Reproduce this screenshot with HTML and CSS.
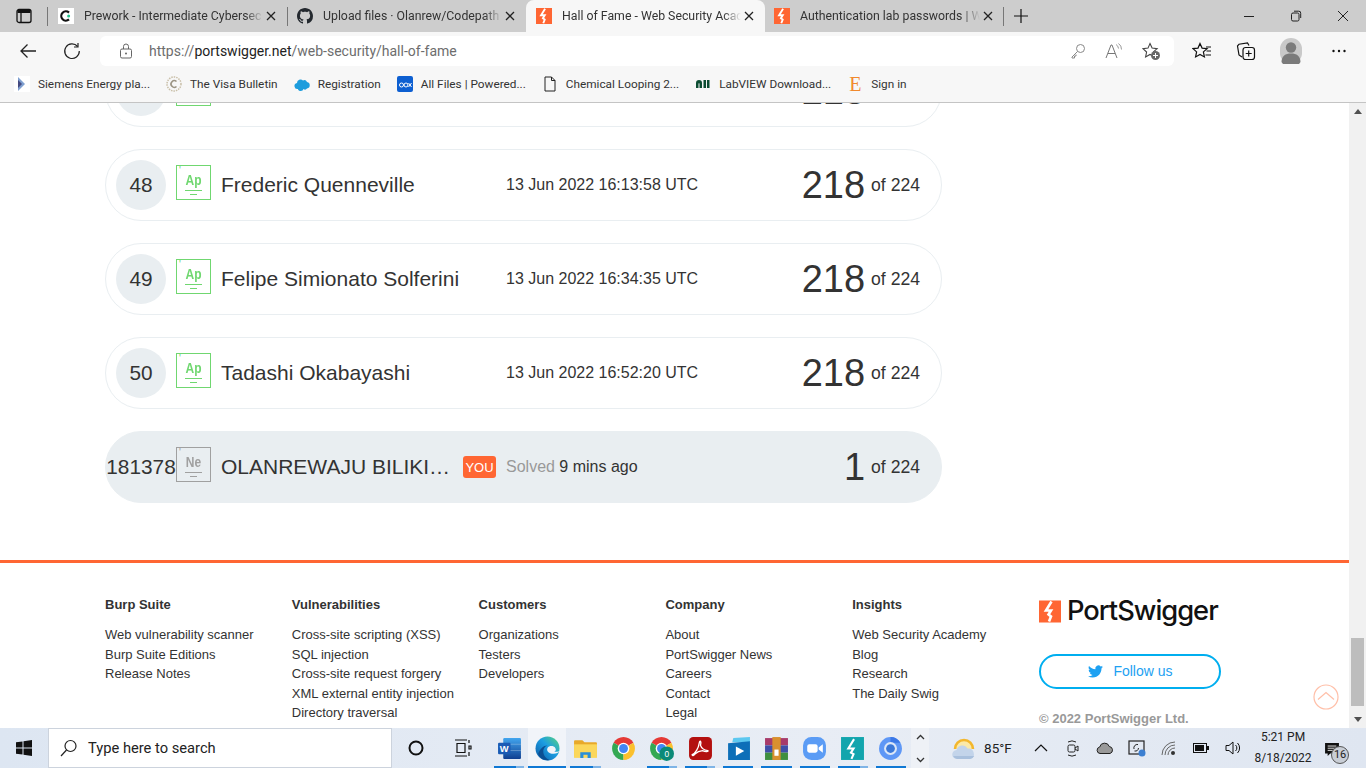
FILE: index.html
```html
<!DOCTYPE html>
<html lang="en">
<head>
  <meta charset="UTF-8">
  <title>Hall of Fame - Web Security Academy</title>
  <link rel="stylesheet" href="styles.css">
</head>
<body>
  <svg class="defs" width="0" height="0">
    <defs>
      <linearGradient id="edgeGrad" x1="0" y1="1" x2="1" y2="0">
        <stop offset="0" stop-color="#0c59a4"/>
        <stop offset="0.55" stop-color="#1b9de2"/>
        <stop offset="1" stop-color="#5bd77a"/>
      </linearGradient>
      <linearGradient id="wordGrad" x1="0" y1="0" x2="0" y2="1">
        <stop offset="0" stop-color="#41a5ee"/>
        <stop offset="1" stop-color="#103f91"/>
      </linearGradient>
    </defs>
    <symbol id="swig" viewBox="0 0 22 22">
      <rect width="22" height="22" fill="#ff6633"/>
      <path d="M12.5 1 7 10h5l-2.500 4 2.500 2-2 5" fill="none" stroke="#fff" stroke-width="2.600"/>
    </symbol>
    <symbol id="close" viewBox="0 0 10 10">
      <path d="M1 1l8 8M9 1l-8 8" fill="none" stroke="#222" stroke-width="1.300"/>
    </symbol>
    <symbol id="chrome" viewBox="0 0 24 24">
      <path d="M12 12 2.500 6.500A11 11 0 0 1 21.500 6.500z" fill="#e53935"/>
      <path d="M12 12 2.500 6.500A11 11 0 0 0 12 23z" fill="#34a853"/>
      <path d="M12 12v11A11 11 0 0 0 21.500 6.500z" fill="#fbc02d"/>
      <circle cx="12" cy="12" r="5.600" fill="#fff"/>
      <circle cx="12" cy="12" r="4.300" fill="#4285f4"/>
    </symbol>
  </svg>

  <!-- tab strip -->
  <div class="tabstrip">
    <div class="tab-side">
      <svg width="16" height="16" viewBox="0 0 16 16"><rect x="1" y="1.500" width="14" height="13" rx="2" fill="none" stroke="#111" stroke-width="1.300"/><path d="M5 5v9" stroke="#111" stroke-width="1.300"/><rect x="1.500" y="2" width="13" height="3" fill="#111"/></svg>
    </div>
    <div class="tab">
      <svg class="fav" viewBox="0 0 16 16"><rect width="16" height="16" fill="#fff"/><path d="M11 4.600A4.600 4.600 0 1 0 11 11.400" fill="none" stroke="#111" stroke-width="2.200"/><circle cx="10.600" cy="8" r="1.500" fill="#21c48d"/></svg>
      <span class="tab-title">Prework - Intermediate Cybersec</span>
      <svg class="tab-x"><use href="#close"/></svg>
    </div>
    <div class="tab tab-sep">
      <svg class="fav" viewBox="0 0 16 16"><path fill="#24292f" d="M8 0C3.58 0 0 3.58 0 8c0 3.54 2.29 6.53 5.47 7.59.4.07.55-.17.55-.38 0-.19-.01-.82-.01-1.49-2.01.37-2.53-.49-2.69-.94-.09-.23-.48-.94-.82-1.13-.28-.15-.68-.52-.01-.53.63-.01 1.08.58 1.23.82.72 1.21 1.87.87 2.33.66.07-.52.28-.87.51-1.07-1.78-.2-3.64-.89-3.64-3.95 0-.87.31-1.59.82-2.15-.08-.2-.36-1.02.08-2.12 0 0 .67-.21 2.2.82.64-.18 1.32-.27 2-.27.68 0 1.36.09 2 .27 1.53-1.04 2.2-.82 2.2-.82.44 1.1.16 1.92.08 2.12.51.56.82 1.27.82 2.15 0 3.07-1.87 3.75-3.65 3.95.29.25.54.73.54 1.48 0 1.07-.01 1.93-.01 2.2 0 .21.15.46.55.38A8.013 8.013 0 0016 8c0-4.42-3.58-8-8-8z"/></svg>
      <span class="tab-title">Upload files · Olanrew/Codepath</span>
      <svg class="tab-x"><use href="#close"/></svg>
    </div>
    <div class="tab tab-active">
      <svg class="fav"><use href="#swig"/></svg>
      <span class="tab-title">Hall of Fame - Web Security Acac</span>
      <svg class="tab-x"><use href="#close"/></svg>
    </div>
    <div class="tab tab-last">
      <svg class="fav"><use href="#swig"/></svg>
      <span class="tab-title">Authentication lab passwords | W</span>
      <svg class="tab-x"><use href="#close"/></svg>
    </div>
    <div class="tab-new">
      <svg width="16" height="16" viewBox="0 0 16 16"><path d="M8 1v14M1 8h14" stroke="#111" stroke-width="1.200"/></svg>
    </div>
    <div class="win-controls">
      <svg width="12" height="12" viewBox="0 0 12 12"><path d="M1 6.500h10" stroke="#222"/></svg>
      <svg width="12" height="12" viewBox="0 0 12 12"><rect x="1.500" y="3" width="7.500" height="8" rx="1.500" fill="none" stroke="#222"/><path d="M4 1.200h4.500A2 2 0 0 1 10.700 3.400V8" fill="none" stroke="#222"/></svg>
      <svg width="12" height="12" viewBox="0 0 12 12"><path d="M1 1l10 10M11 1 1 11" stroke="#222"/></svg>
    </div>
  </div>

  <!-- address bar -->
  <div class="toolbar">
    <button class="tool-btn first">
      <svg width="18" height="18" viewBox="0 0 18 18"><path d="M17 9H2M8.500 2.500 2 9l6.500 6.500" fill="none" stroke="#222" stroke-width="1.300"/></svg>
    </button>
    <button class="tool-btn">
      <svg width="18" height="18" viewBox="0 0 18 18"><path d="M14.600 4.500A7.300 7.300 0 1 0 16.300 9" fill="none" stroke="#222" stroke-width="1.200"/><path d="M15 1v4h-4" fill="none" stroke="#222" stroke-width="1.200"/></svg>
    </button>
    <div class="address">
      <svg class="lock" width="14" height="16" viewBox="0 0 14 16"><rect x="1.500" y="6" width="11" height="9" rx="1.500" fill="none" stroke="#666"/><path d="M4.500 6V3.500a2.500 2.500 0 0 1 5 0V6" fill="none" stroke="#666"/><circle cx="7" cy="10.500" r="1" fill="#666"/></svg>
      <span class="url">https://<b>portswigger.net</b>/web-security/hall-of-fame</span>
      <div class="addr-icons">
        <svg width="16" height="16" viewBox="0 0 16 16"><circle cx="10.500" cy="5.500" r="4" fill="none" stroke="#888"/><path d="M7.500 8.500 2 14v1h2.500v-2H6v-1.500" fill="none" stroke="#888"/></svg>
        <svg width="18" height="16" viewBox="0 0 18 16"><path d="M1 15 6 2h1l5 13M3 10.500h7" fill="none" stroke="#777"/><path d="M11 1.500a5 5 0 0 1 2.500 4M13.500 .5a7 7 0 0 1 3 6" fill="none" stroke="#999"/></svg>
        <svg width="19" height="19" viewBox="0 0 19 19"><path d="M8 1.500l2.100 4.600 5 .5-3.700 3.300 1 4.900L8 12.400l-4.400 2.500 1-4.900L1 6.600l5-.5z" fill="none" stroke="#444" stroke-width="1.100"/><circle cx="13.500" cy="13.500" r="4.500" fill="#666"/><path d="M13.500 11v5M11 13.500h5" stroke="#fff"/></svg>
      </div>
    </div>
    <div class="tool-right">
      <svg width="20" height="18" viewBox="0 0 20 18"><path d="M8 1.500l2.100 4.600 5 .5-3.700 3.300 1 5L8 12.400l-4.400 2.500 1-5L1 6.600l5-.5z" fill="none" stroke="#111" stroke-width="1.200"/><path d="M14 5h5M14.500 9h4.500M13.500 13h5.500" stroke="#111" stroke-width="1.200"/></svg>
      <svg width="20" height="20" viewBox="0 0 20 20"><rect x="7" y="6.500" width="11.500" height="12" rx="2.500" fill="none" stroke="#111" stroke-width="1.200"/><path d="M12.700 9.500v6M9.700 12.500h6M13 4.500 11.500 2 3 3.200 1.500 5 3 14l3 2" fill="none" stroke="#111" stroke-width="1.200"/></svg>
      <span class="avatar">
        <svg width="22" height="26" viewBox="0 0 22 26"><rect width="22" height="26" rx="11" fill="#c9c9c9"/><circle cx="11" cy="9.500" r="5.200" fill="#7b7b7b"/><path d="M1.500 24c0-6 4-8.500 9.500-8.500S20.500 18 20.500 24a11 11 0 0 1-19 0z" fill="#7b7b7b"/></svg>
      </span>
      <svg class="more" width="16" height="16" viewBox="0 0 16 16"><circle cx="2.500" cy="8" r="1.200" fill="#111"/><circle cx="8" cy="8" r="1.200" fill="#111"/><circle cx="13.500" cy="8" r="1.200" fill="#111"/></svg>
    </div>
  </div>

  <!-- favourites bar -->
  <div class="bookmarks">
    <div class="bm">
      <svg viewBox="0 0 16 16"><rect width="16" height="16" fill="#fff"/><path d="M4 1l7 7-7 7z" fill="#7f9fd0"/><path d="M4 4l4 4-4 4z" fill="#444a80"/></svg>
      <span>Siemens Energy pla...</span>
    </div>
    <div class="bm">
      <svg viewBox="0 0 16 16"><circle cx="8" cy="8" r="7" fill="none" stroke="#c9bfa8" stroke-width="1.500" stroke-dasharray="1.500 1"/><path d="M10.500 5.500A3.300 3.300 0 1 0 10.500 10.500" fill="none" stroke="#9b9484" stroke-width="1.600"/></svg>
      <span>The Visa Bulletin</span>
    </div>
    <div class="bm">
      <svg viewBox="0 0 16 16"><path d="M4 13a3 3 0 0 1-1-6 3.500 3.500 0 0 1 6-2.500 3 3 0 0 1 4 1.500 3.300 3.300 0 0 1 0 6.500 2.500 2.500 0 0 1-3.500.5 3 3 0 0 1-5.500.5z" fill="#1d9ddd"/></svg>
      <span>Registration</span>
    </div>
    <div class="bm">
      <svg viewBox="0 0 16 16"><rect width="16" height="16" rx="2" fill="#0d5fd1"/><circle cx="4.500" cy="9" r="2" fill="none" stroke="#fff"/><circle cx="9" cy="9" r="2" fill="none" stroke="#fff"/><path d="M11.500 7l3 4M14.500 7l-3 4" stroke="#fff"/></svg>
      <span>All Files | Powered...</span>
    </div>
    <div class="bm">
      <svg viewBox="0 0 16 16"><path d="M3 1h6.500L13 4.500V15H3z M9.500 1v3.500H13" fill="none" stroke="#222"/></svg>
      <span>Chemical Looping 2...</span>
    </div>
    <div class="bm">
      <svg viewBox="0 0 16 16"><path d="M1 12V7a3 3 0 0 1 6 0v5H4.500V7.500a.7.700 0 0 0-1 0V12z" fill="#0d4d33"/><path d="M8.500 4H11v8H8.500zM12 4h2.500v8H12z" fill="#0d4d33"/></svg>
      <span>LabVIEW Download...</span>
    </div>
    <div class="bm">
      <span class="etsy">E</span>
      <span>Sign in</span>
    </div>
  </div>

  <!-- page -->
  <div class="viewport">
    <main class="page">
      <div class="rows">
        <div class="row">
          <span class="rank">47</span>
          <span class="element">
            <i class="el-tick">'</i><b>Ap</b><i class="el-lines"></i>
          </span>
          <span class="name">Jan Kowalski</span>
          <span class="date">13 Jun 2022 15:58:41 UTC</span>
          <span class="score"><strong>218</strong> of 224</span>
        </div>
        <div class="row">
          <span class="rank">48</span>
          <span class="element">
            <i class="el-tick">'</i><b>Ap</b><i class="el-lines"></i>
          </span>
          <span class="name">Frederic Quenneville</span>
          <span class="date">13 Jun 2022 16:13:58 UTC</span>
          <span class="score"><strong>218</strong> of 224</span>
        </div>
        <div class="row">
          <span class="rank">49</span>
          <span class="element">
            <i class="el-tick">'</i><b>Ap</b><i class="el-lines"></i>
          </span>
          <span class="name">Felipe Simionato Solferini</span>
          <span class="date">13 Jun 2022 16:34:35 UTC</span>
          <span class="score"><strong>218</strong> of 224</span>
        </div>
        <div class="row">
          <span class="rank">50</span>
          <span class="element">
            <i class="el-tick">'</i><b>Ap</b><i class="el-lines"></i>
          </span>
          <span class="name">Tadashi Okabayashi</span>
          <span class="date">13 Jun 2022 16:52:20 UTC</span>
          <span class="score"><strong>218</strong> of 224</span>
        </div>
        <div class="row row-me">
          <span class="rank">181378</span>
          <span class="element element-ne">
            <i class="el-tick">'</i><b>Ne</b><i class="el-lines"></i>
          </span>
          <span class="name name-me">OLANREWAJU BILIKI…</span>
          <span class="you">YOU</span>
          <span class="date"><em>Solved</em> 9 mins ago</span>
          <span class="score"><strong>1</strong> of 224</span>
        </div>
      </div>

      <footer class="footer">
        <div class="foot-col">
          <h4>Burp Suite</h4>
          <a>Web vulnerability scanner</a>
          <a>Burp Suite Editions</a>
          <a>Release Notes</a>
        </div>
        <div class="foot-col">
          <h4>Vulnerabilities</h4>
          <a>Cross-site scripting (XSS)</a>
          <a>SQL injection</a>
          <a>Cross-site request forgery</a>
          <a>XML external entity injection</a>
          <a>Directory traversal</a>
          <a>Server-side request forgery</a>
        </div>
        <div class="foot-col">
          <h4>Customers</h4>
          <a>Organizations</a>
          <a>Testers</a>
          <a>Developers</a>
        </div>
        <div class="foot-col">
          <h4>Company</h4>
          <a>About</a>
          <a>PortSwigger News</a>
          <a>Careers</a>
          <a>Contact</a>
          <a>Legal</a>
          <a>Privacy Notice</a>
        </div>
        <div class="foot-col">
          <h4>Insights</h4>
          <a>Web Security Academy</a>
          <a>Blog</a>
          <a>Research</a>
          <a>The Daily Swig</a>
        </div>
        <div class="foot-col foot-brand">
          <div class="logo">
            <svg width="22" height="23"><use href="#swig"/></svg>
            <span>PortSwigger</span>
          </div>
          <div class="follow">
            <svg width="17" height="15" viewBox="0 0 24 24"><path fill="#1da1f2" d="M23.953 4.57a10 10 0 01-2.825.775 4.958 4.958 0 002.163-2.723c-.951.555-2.005.959-3.127 1.184a4.92 4.92 0 00-8.384 4.482C7.69 8.095 4.067 6.13 1.64 3.162a4.822 4.822 0 00-.666 2.475c0 1.71.87 3.213 2.188 4.096a4.904 4.904 0 01-2.228-.616v.06a4.923 4.923 0 003.946 4.827 4.996 4.996 0 01-2.212.085 4.936 4.936 0 004.604 3.417 9.867 9.867 0 01-6.102 2.105c-.39 0-.779-.023-1.17-.067a13.995 13.995 0 007.557 2.209c9.053 0 13.998-7.496 13.998-13.985 0-.21 0-.42-.015-.63A9.935 9.935 0 0024 4.59z"/></svg>
            <span>Follow us</span>
          </div>
          <p class="copyright">© 2022 PortSwigger Ltd.</p>
        </div>
      </footer>
    </main>

    <div class="to-top">
      <svg width="26" height="26" viewBox="0 0 26 26"><circle cx="13" cy="13" r="12" fill="#fff" stroke="#ffbfa8" stroke-width="1.200"/><path d="M5 15.500 13 8.500l8 7" fill="none" stroke="#ffbfa8" stroke-width="1.200"/></svg>
    </div>

    <div class="scrollbar">
      <span class="arrow-up"></span>
      <span class="thumb"></span>
      <span class="arrow-down"></span>
    </div>
  </div>

  <!-- windows taskbar -->
  <div class="taskbar">
    <div class="start">
      <svg width="16" height="16" viewBox="0 0 16 16"><path fill="#111" d="M0 2.300 6.500 1.400v6.100H0zM7.500 1.300 16 0v7.500H7.500zM0 8.500h6.500v6.100L0 13.700zM7.500 8.500H16V16l-8.500-1.300z"/></svg>
    </div>
    <div class="search">
      <svg width="18" height="18" viewBox="0 0 18 18"><circle cx="10.500" cy="7" r="5.500" fill="none" stroke="#222" stroke-width="1.200"/><path d="M6.500 11 1 17" stroke="#222" stroke-width="1.200"/></svg>
      <span>Type here to search</span>
    </div>
    <div class="task-fixed">
      <svg width="16" height="16" viewBox="0 0 16 16"><circle cx="8" cy="8" r="6.500" fill="none" stroke="#111" stroke-width="2"/></svg>
    </div>
    <div class="task-fixed">
      <svg width="18" height="18" viewBox="0 0 18 18"><path d="M1 1h12M1 17h12M3 4.500h8v9H3z" fill="none" stroke="#111" stroke-width="1.200"/><path d="M15 1v3M15 7h2v3h-2zM15 13v4" fill="none" stroke="#111" stroke-width="1.200"/></svg>
    </div>
    <div class="apps">
      <div class="app run multi">
        <svg viewBox="0 0 24 24"><rect x="6" y="2" width="17" height="20" rx="1" fill="url(#wordGrad)"/><path d="M6 8h17M6 14h17" stroke="#fff" stroke-opacity=".25"/><rect x="1" y="6.500" width="12" height="11" rx="1" fill="#1a5bb5"/><text x="7" y="15.500" class="app-letter">W</text></svg>
      </div>
      <div class="app run active">
        <svg viewBox="0 0 24 24"><circle cx="12" cy="12" r="11.500" fill="url(#edgeGrad)"/><path d="M24 14.500c-1.500 2-6 3.500-9.500 2-2.500-1-3.500-3-2.500-5 1.500-2.500 6-2.500 7.500 0 1 1.500.5 3-1 3.500 2 .5 4.500 0 5.500-.5z" fill="#f1f4f9"/><path d="M3 17c2-5 5-8 9-8-3 1-4.500 3.500-4 7 .4 3 2.500 5.500 6 7-5 1-9.500-1.500-11-6z" fill="#0b4f93"/></svg>
      </div>
      <div class="app run multi">
        <svg viewBox="0 0 24 24"><path d="M1 5a1 1 0 0 1 1-1h7l2 2h11a1 1 0 0 1 1 1v13H1z" fill="#e8a92a"/><rect x="1" y="8" width="22" height="13" fill="#fbd75b"/><path d="M7 21v-5.500h10V21h-3v-3h-4v3z" fill="#2a8fd8"/></svg>
      </div>
      <div class="app">
        <svg viewBox="0 0 24 24"><use href="#chrome"/></svg>
      </div>
      <div class="app run multi">
        <svg viewBox="0 0 24 24"><use href="#chrome"/><circle cx="17" cy="17" r="7" fill="#0b8a78"/><text x="17" y="20" class="app-count">0</text></svg>
      </div>
      <div class="app run multi">
        <svg viewBox="0 0 24 24"><rect x="1" y="1" width="22" height="22" rx="4" fill="#b3100f"/><path d="M4 18c3-1 6-6 7-12 .5-2 2-1 1 3 1 3 3 4.500 7 5 1 1-2 1.500-5 0-3 .3-5 1-7 3-1 1.500-3 2.500-3 1z" fill="none" stroke="#fff" stroke-width="1.300"/></svg>
      </div>
      <div class="app run">
        <svg viewBox="0 0 24 24"><path d="M7 2l16-1v5H6z" fill="#5cc8f0"/><path d="M2 7l21-2v18H2z" fill="#0d6fb8"/><path d="M9.500 10v9l8-4.500z" fill="#fff"/></svg>
      </div>
      <div class="app run">
        <svg viewBox="0 0 24 24"><rect x="1" y="2" width="22" height="7" fill="#a83b6a"/><rect x="1" y="9" width="22" height="7" fill="#3f4fa8"/><rect x="1" y="16" width="22" height="7" fill="#3f8f3f"/><rect x="8" y="1" width="8" height="22" fill="#d9902f"/><rect x="10" y="13" width="4" height="6" fill="#fff"/></svg>
      </div>
      <div class="app run">
        <svg viewBox="0 0 24 24"><rect x="1" y="1" width="22" height="22" rx="8" fill="#5b9cf5"/><rect x="5" y="8" width="10" height="8" rx="2" fill="#fff"/><path d="M16 11l4-3v8l-4-3z" fill="#fff"/></svg>
      </div>
      <div class="app run multi">
        <svg viewBox="0 0 24 24"><rect x="1" y="1" width="22" height="22" fill="#12a5ad"/><path d="M13.500 3 8 12h5l-2.500 4 2.500 1.500-2 4.500" fill="none" stroke="#fff" stroke-width="2"/></svg>
      </div>
      <div class="app run">
        <svg viewBox="0 0 24 24"><circle cx="12" cy="12" r="11" fill="#5e97f6"/><path d="M12 1a11 11 0 0 1 9.500 5.500L12 6.500z" fill="#3b78e7"/><circle cx="12" cy="12" r="6.200" fill="#dce7f7"/><circle cx="12" cy="12" r="4.200" fill="#3b78d8"/></svg>
      </div>
    </div>
    <div class="task-scroll">
      <svg width="9" height="6" viewBox="0 0 9 6"><path d="M1 5l3.500-3.500L8 5" fill="none" stroke="#333" stroke-width="1.300"/></svg>
      <svg width="9" height="6" viewBox="0 0 9 6"><path d="M1 1l3.500 3.500L8 1" fill="none" stroke="#333" stroke-width="1.300"/></svg>
    </div>
    <div class="tray">
      <svg class="weather" width="26" height="26" viewBox="0 0 26 26"><path d="M4 14a9 9 0 0 1 18 0" fill="#fbe9a8" stroke="#f3b72d" stroke-width="2.600"/><path d="M6 24a4.500 4.500 0 0 1-.5-9 6 6 0 0 1 11-1.500 5.500 5.500 0 0 1 3 10.500z" fill="#c3d4ea"/><path d="M6 24a4.500 4.500 0 0 1-3.800-3h21a5.500 5.500 0 0 1-4.200 3z" fill="#a9c0dd"/></svg>
      <span class="temp">85°F</span>
      <svg class="tray-chev" width="14" height="8" viewBox="0 0 14 8"><path d="M1 7l6-6 6 6" fill="none" stroke="#111" stroke-width="1.200"/></svg>
      <span class="tray-ico"><svg width="14" height="18" viewBox="0 0 14 18"><rect x="2" y="6" width="7" height="7" rx="1.500" fill="none" stroke="#222"/><path d="M9 9l3-2v5l-3-2M2 3a8 8 0 0 1 8 0M2 16a8 8 0 0 0 8 0" fill="none" stroke="#222"/></svg></span>
      <span class="tray-ico"><svg width="18" height="14" viewBox="0 0 18 14"><path d="M4 12.500a3.300 3.300 0 0 1-.3-6.500 5 5 0 0 1 9.600-.5 3.600 3.600 0 0 1 .7 7z" fill="#999" stroke="#222"/></svg></span>
      <span class="tray-ico"><svg width="18" height="18" viewBox="0 0 18 18"><rect x="1" y="2" width="15" height="13" fill="none" stroke="#222" stroke-width="1.200"/><path d="M10 5.500A3.500 3.500 0 0 0 6 10M6.500 12a3.500 3.500 0 0 0 4-3" fill="none" stroke="#222"/><circle cx="14" cy="14" r="3.500" fill="#3c7fd1"/></svg></span>
      <span class="tray-ico"><svg width="18" height="16" viewBox="0 0 18 16"><g fill="none" stroke="#666"><path d="M2 15a13 13 0 0 1 13-13"/><path d="M5 15a10 10 0 0 1 10-10"/><path d="M8 15a7 7 0 0 1 7-7"/></g><circle cx="13" cy="13" r="2" fill="#333"/></svg></span>
      <span class="tray-ico"><svg width="16" height="10" viewBox="0 0 16 10"><rect x=".5" y=".5" width="13" height="9" fill="none" stroke="#111"/><rect x="2" y="2" width="9" height="6" fill="#111"/><rect x="14" y="3" width="2" height="4" fill="#111"/></svg></span>
      <span class="tray-ico"><svg width="17" height="16" viewBox="0 0 17 16"><path d="M1 5.500h3L8 2v12L4 10.500H1z" fill="none" stroke="#111"/><path d="M10.500 5a4 4 0 0 1 0 6M12.500 3a7 7 0 0 1 0 10" fill="none" stroke="#111"/></svg></span>
      <div class="clock">
        <span>5:21 PM</span>
        <span>8/18/2022</span>
      </div>
      <div class="notify">
        <svg width="16" height="13" viewBox="0 0 16 15"><path d="M0 0h16v12H6l-3 3v-3H0z" fill="#111"/><path d="M3 3.500h10M3 6h10M3 8.500h7" stroke="#fff"/></svg>
        <span class="notify-count">16</span>
      </div>
    </div>
  </div>
</body>
</html>
```

FILE: styles.css
```css
/* General */
* {
  box-sizing: border-box;
}

body {
  margin: 0;
  width: 1366px;
  height: 768px;
  overflow: hidden;
  display: flex;
  flex-direction: column;
  font-family: "Liberation Sans", Arial, sans-serif;
  background: #fff;
  color: #333;
}

.defs {
  position: absolute;
}

/* Tabs */
.tabstrip {
  height: 32px;
  flex: none;
  display: flex;
  background: #cdcdcd;
  font-family: Roboto, sans-serif;
  font-size: 12.3px;
  color: #333;
}

.tab-side {
  width: 48px;
  display: flex;
  align-items: center;
  justify-content: center;
  position: relative;
}

.tab-side::after,
.tab-sep::before,
.tab-last::after {
  content: "";
  position: absolute;
  top: 7px;
  height: 19px;
  width: 1px;
  background: #777;
}

.tab-side::after {
  right: 0;
}

.tab-sep::before {
  left: 0;
}

.tab {
  width: 239px;
  display: flex;
  align-items: center;
  padding: 0 8px 0 10px;
  position: relative;
}

.tab-active {
  background: #f7f7f7;
  border-radius: 8px 8px 0 0;
}

.tab-last {
  width: 239px;
  padding-left: 9px;
}

.tab-last::after {
  right: 0;
}

.fav {
  width: 16px;
  height: 16px;
  flex: none;
  margin-right: 10px;
}

.tab-title {
  flex: 1;
  overflow: hidden;
  white-space: nowrap;
  -webkit-mask-image: linear-gradient(to right, #000 90%, transparent 100%);
  mask-image: linear-gradient(to right, #000 90%, transparent 100%);
}

.tab-x {
  width: 10px;
  height: 10px;
  flex: none;
  margin: 0 3px 0 3px;
}

.tab-new {
  width: 34px;
  display: flex;
  align-items: center;
  justify-content: center;
}

.win-controls {
  margin-left: auto;
  display: flex;
  align-items: center;
  gap: 35px;
  padding-right: 17px;
}

/* Address bar */
.toolbar {
  height: 37px;
  flex: none;
  display: flex;
  align-items: center;
  background: #f7f7f7;
}

.tool-btn {
  width: 32px;
  height: 30px;
  margin-right: 12px;
  padding: 0;
  border: 0;
  background: none;
  display: flex;
  align-items: center;
  justify-content: center;
}

.tool-btn.first {
  width: 56px;
  margin-right: 0;
}

.address {
  width: 1074px;
  height: 30px;
  align-self: flex-start;
  margin-top: 4px;
  background: #fff;
  border-radius: 6px;
  display: flex;
  align-items: center;
  padding-left: 19px;
}

.lock {
  margin-right: 16px;
}

.url {
  font-family: Roboto, sans-serif;
  font-size: 14px;
  color: #6d6d6d;
}

.url b {
  font-weight: 400;
  color: #222;
}

.addr-icons {
  margin-left: auto;
  padding-right: 13px;
  display: flex;
  align-items: center;
  gap: 19px;
}

.tool-right {
  flex: 1;
  display: flex;
  align-items: center;
  gap: 24px;
  padding-left: 18px;
}

.avatar {
  display: flex;
}

.more {
  margin-left: 5px;
}

/* Favourites */
.bookmarks {
  height: 34px;
  flex: none;
  display: flex;
  align-items: center;
  gap: 16px;
  padding: 0 0 3px 14px;
  background: #f7f7f7;
  border-bottom: 1px solid #c4c4c4;
  font-family: Roboto, sans-serif;
  font-size: 11.8px;
  color: #333;
}

.bm {
  display: flex;
  align-items: center;
  gap: 8px;
}

.bm svg {
  width: 16px;
  height: 16px;
}

.etsy {
  width: 16px;
  font-family: "Liberation Serif", serif;
  font-size: 20px;
  line-height: 16px;
  color: #f1892d;
  text-align: center;
}

/* Page */
.viewport {
  flex: 1;
  min-height: 0;
  display: flex;
  overflow: hidden;
  position: relative;
}

.page {
  flex: 1;
  min-width: 0;
  margin-top: -48px;
}

.rows {
  display: flex;
  flex-direction: column;
  gap: 22px;
  width: 837px;
  margin-left: 105px;
}

/* Leaderboard rows */
.row {
  height: 72px;
  display: flex;
  align-items: center;
  border: 1px solid #e9eef1;
  border-radius: 36px;
  padding: 0 21px 0 10px;
}

.row-me {
  background: #e9eef1;
}

.rank {
  width: 50px;
  height: 50px;
  flex: none;
  display: flex;
  align-items: center;
  justify-content: center;
  border-radius: 50%;
  background: #e9eef1;
  font-size: 20.8px;
}

.element {
  width: 35px;
  height: 35px;
  flex: none;
  margin: -5px 10px 0;
  position: relative;
  border: 1.5px solid #70d770;
  color: #70d770;
  text-align: center;
  background: #fff;
}

.element b {
  display: block;
  margin-top: 4px;
  font-size: 15px;
  line-height: 20px;
  transform: scaleX(0.8);
}

.el-tick {
  position: absolute;
  left: 2px;
  top: -1px;
  font-size: 10px;
  line-height: 12px;
  font-style: normal;
}

.el-lines {
  display: block;
  width: 17px;
  height: 4px;
  margin: 0 auto;
  border-top: 1px solid currentColor;
  position: relative;
}

.el-lines::after {
  content: "";
  position: absolute;
  left: 5px;
  top: 3px;
  width: 7px;
  height: 1px;
  background: currentColor;
}

.element-ne {
  border-color: #a0a0a0;
  color: #a0a0a0;
  background: #e9eef1;
}

.name {
  width: 285px;
  flex: none;
  font-size: 21px;
  white-space: nowrap;
}

.name-me {
  width: 228px;
}

.you {
  width: 33px;
  height: 22px;
  flex: none;
  margin: 0 10px 0 14px;
  border-radius: 3px;
  background: #ff6633;
  color: #fff;
  font-size: 13px;
  line-height: 23px;
  text-align: center;
}

.date {
  font-size: 16px;
}

.date em {
  font-style: normal;
  color: #999;
}

.score {
  margin-left: auto;
  display: flex;
  align-items: center;
  gap: 6px;
  font-size: 17.6px;
}

.score strong {
  font-weight: 400;
  font-size: 38px;
  line-height: 40px;
}

/* Footer */
.footer {
  margin-top: 57px;
  border-top: 3px solid #ff6633;
  padding: 32px 0 0 105px;
  display: flex;
  font-size: 13px;
  line-height: 19.6px;
}

.foot-col {
  width: 186.8px;
  flex: none;
  display: flex;
  flex-direction: column;
}

.foot-col h4 {
  margin: 0 0 10.5px;
  font-size: 13px;
  line-height: 19.6px;
  color: #333;
}

.foot-col a {
  color: #333;
}

.logo {
  display: flex;
  align-items: center;
  gap: 6px;
  height: 24px;
  margin-top: 4px;
  font-family: Inter, sans-serif;
  font-weight: 500;
  font-size: 27.3px;
  letter-spacing: -1px;
  color: #111;
}

.follow {
  width: 182px;
  height: 35px;
  margin-top: 31px;
  display: flex;
  align-items: center;
  justify-content: center;
  gap: 9px;
  border: 2px solid #00aeef;
  border-radius: 18px;
  font-size: 14px;
  color: #1da1f2;
}

.copyright {
  margin: 20px 0 0;
  font-weight: 700;
  color: #999;
}

.to-top {
  position: absolute;
  left: 1313px;
  top: 581px;
  width: 26px;
  height: 26px;
  display: flex;
}

/* Scrollbar */
.scrollbar {
  width: 17px;
  flex: none;
  display: flex;
  flex-direction: column;
  align-items: center;
  background: #f1f1f1;
  padding: 6px 0;
}

.arrow-up,
.arrow-down {
  width: 0;
  height: 0;
  border: 4px solid transparent;
}

.arrow-up {
  border-bottom: 5px solid #505050;
  border-top: 0;
}

.arrow-down {
  border-top: 5px solid #505050;
  border-bottom: 0;
  margin-top: 11px;
}

.thumb {
  width: 13px;
  height: 68px;
  margin-top: auto;
  background: #bdbdbd;
}

/* Taskbar */
.taskbar {
  height: 40px;
  flex: none;
  display: flex;
  align-items: center;
  background: linear-gradient(to right, #dde6f2, #e8edf5 60%, #dfe6f1);
  font-family: Roboto, sans-serif;
  color: #222;
}

.start {
  width: 48px;
  display: flex;
  justify-content: center;
}

.search {
  width: 344px;
  height: 40px;
  display: flex;
  align-items: center;
  gap: 10px;
  padding-left: 11px;
  background: #fff;
  border: 1px solid #ccd3dd;
  font-size: 14.7px;
}

.task-fixed {
  width: 47px;
  display: flex;
  justify-content: center;
}

.apps {
  display: flex;
  height: 40px;
  margin-left: 4px;
}

.app {
  width: 38.2px;
  height: 40px;
  display: flex;
  align-items: center;
  justify-content: center;
  position: relative;
}

.app svg {
  width: 25px;
  height: 25px;
}

.app.active {
  background: #f1f4f9;
}

.app.run::after {
  content: "";
  position: absolute;
  left: 4px;
  right: 4px;
  bottom: 0;
  height: 2px;
  background: #0f78d4;
}

.app.active::after {
  left: 0;
  right: 0;
}

/* several windows open: lighter end on the bar */
.app.multi::before {
  content: "";
  position: absolute;
  right: 4px;
  bottom: 0;
  width: 8px;
  height: 2px;
  background: #7fb4e6;
  z-index: 1;
}

.app-letter {
  font-family: "Liberation Sans", sans-serif;
  font-size: 9px;
  font-weight: 700;
  fill: #fff;
  text-anchor: middle;
}

.app-count {
  font-family: "Liberation Sans", sans-serif;
  font-size: 8px;
  fill: #fff;
  text-anchor: middle;
}

.task-scroll {
  width: 18px;
  height: 40px;
  margin-left: 1px;
  display: flex;
  flex-direction: column;
  align-items: center;
  justify-content: center;
  gap: 17px;
  background: #eef1f6;
}

.tray {
  flex: 1;
  display: flex;
  align-items: center;
  padding-left: 22px;
}

.temp {
  width: 42px;
  margin-left: 7px;
  font-size: 13.5px;
}

.tray-chev {
  margin: 0 9px 0 8px;
}

.tray-ico {
  width: 32px;
  display: flex;
  justify-content: center;
}

.clock {
  width: 68px;
  display: flex;
  flex-direction: column;
  align-items: center;
  font-size: 12px;
  line-height: 21px;
}

.notify {
  width: 24px;
  height: 34px;
  margin-left: 7px;
  padding-top: 10px;
  position: relative;
}

.notify-count {
  position: absolute;
  left: 7px;
  top: 15px;
  width: 18px;
  height: 18px;
  border-radius: 50%;
  border: 1px solid #555;
  background: #c9ced6;
  font-size: 11px;
  line-height: 16px;
  text-align: center;
}
```
